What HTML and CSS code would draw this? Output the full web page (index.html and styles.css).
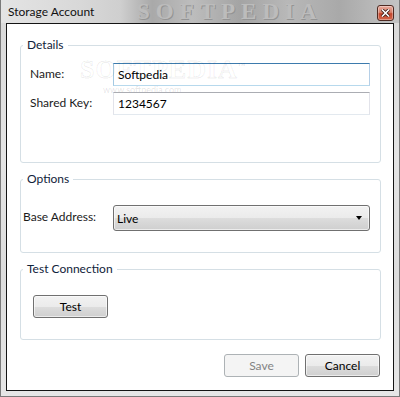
FILE: index.html
```html
<!DOCTYPE html>
<html lang="en">
<head>
    <meta charset="UTF-8">
    <title>Storage Account</title>
    <link rel="stylesheet" href="styles.css">
</head>
<body>

    <div class="window">
        <!-- Title bar -->
        <div class="titlebar">
            <span class="title">Storage Account</span>
            <span class="watermark">SOFTPEDIA</span>
            <button class="close" title="Close">
                <svg width="9" height="8" viewBox="0 0 9 8">
                    <path d="M1 0.5 L8 7.5 M8 0.5 L1 7.5" stroke="#3a1a14" stroke-width="3.2"/>
                    <path d="M1 0.5 L8 7.5 M8 0.5 L1 7.5" stroke="#ffffff" stroke-width="1.6"/>
                </svg>
            </button>
        </div>

        <!-- Client area -->
        <div class="client">
            <div class="client-mark">SOFTPEDIA<sup>™</sup></div>
            <div class="client-url">www.softpedia.com</div>

            <div class="group details">
                <span class="group-title">Details</span>
                <label class="field-label" for="name">Name:</label>
                <input class="textbox focused" id="name" type="text" value="Softpedia">
                <label class="field-label" for="key">Shared Key:</label>
                <input class="textbox" id="key" type="text" value="1234567">
            </div>

            <div class="group options">
                <span class="group-title">Options</span>
                <span class="field-label">Base Address:</span>
                <div class="combo">
                    <span>Live</span>
                    <span class="arrow"></span>
                </div>
            </div>

            <div class="group test">
                <span class="group-title">Test Connection</span>
                <button class="btn">Test</button>
            </div>

            <div class="footer">
                <button class="btn" disabled>Save</button>
                <button class="btn">Cancel</button>
            </div>
        </div>
    </div>

</body>
</html>
```

FILE: styles.css
```css
body {
    margin: 0;
    padding: 0;
    font-family: Lato, 'Open Sans', sans-serif;
    font-size: 12px;
    color: #1b1b1b;
}

/* Window frame */
.window {
    width: 400px;
    height: 397px;
    box-sizing: border-box;
    border: 1px solid #7a7a7a;
    border-top: none;
    padding: 0 5px 5px 5px;
    background: linear-gradient(to bottom, #d8d8d8, #e4e4e4 40%, #dcdcdc 70%, #e6e6e6);
}

.titlebar {
    position: relative;
    height: 23px;
    margin: 0 -5px;
    padding: 5px 5px 0 7px;
    box-sizing: border-box;
    display: flex;
    justify-content: space-between;
    align-items: flex-start;
    overflow: hidden;
    background: linear-gradient(to right, #e4e4e4 0, #d8d8d8 20%, #cfcfcf 30%, #a9a9a9 38%, #bdbdbd 48%, #a4a4a4 60%, #b8b8b8 72%, #a9a9a9 85%, #c4c4c4 100%);
}
.title {
    font-size: 12px;
    line-height: 14px;
    color: #111;
    position: relative;
    z-index: 1;
}
.watermark {
    position: absolute;
    left: 136px;
    top: 0;
    font-family: 'Liberation Serif', serif;
    font-weight: bold;
    font-size: 23px;
    line-height: 23px;
    letter-spacing: 6px;
    color: #bcbcbc;
    text-shadow: 1px 1px 0 #949494;
}
.close {
    position: relative;
    z-index: 1;
    width: 17px;
    height: 16px;
    margin: 0;
    padding: 0;
    display: flex;
    align-items: center;
    justify-content: center;
    border: 1px solid #4e2a22;
    border-radius: 3px;
    background: linear-gradient(to bottom, #e9a99b 0, #d7816c 45%, #c4442a 55%, #d2674c 100%);
    box-shadow: inset 0 0 0 1px rgba(255, 255, 255, 0.35);
}

/* Client area */
.client {
    position: relative;
    height: 368px;
    box-sizing: border-box;
    border: 1px solid #141414;
    background: #ffffff;
    display: flex;
    flex-direction: column;
}
.client-mark {
    position: absolute;
    left: 73px;
    top: 31px;
    font-family: 'Liberation Serif', serif;
    font-weight: bold;
    font-size: 26px;
    letter-spacing: 1px;
    color: transparent;
    -webkit-text-stroke: 1px rgba(0, 0, 0, 0.07);
    pointer-events: none;
    z-index: 2;
}
.client-mark sup {
    font-size: 8px;
    -webkit-text-stroke: 0;
    color: rgba(0, 0, 0, 0.1);
}
.client-url {
    position: absolute;
    left: 96px;
    top: 63px;
    font-size: 9px;
    line-height: 6px;
    color: rgba(0, 0, 0, 0.12);
    pointer-events: none;
}

/* Group boxes */
.group {
    position: relative;
    box-sizing: border-box;
    margin: 16px 12px 0 13px;
    border: 1px solid #d5dfe5;
    border-radius: 3px;
}
.group-title {
    position: absolute;
    top: -9px;
    left: 2px;
    padding: 0 4px;
    line-height: 16px;
    background: #ffffff;
    color: #10223a;
}
.field-label {
    line-height: 16px;
}

.details {
    margin-top: 21px;
    height: 118px;
    padding: 17px 10px 0 8px;
    display: grid;
    grid-template-columns: 84px 1fr;
    grid-auto-rows: 23px;
    row-gap: 6px;
    align-items: center;
}
.details .field-label {
    padding: 0 0 1px 1px;
}

.textbox {
    height: 23px;
    box-sizing: border-box;
    margin: 0;
    padding: 0 4px;
    font: inherit;
    color: #000;
    border: 1px solid;
    border-color: #abadb3 #e2e3ea #e3e9ef #e2e3ea;
    outline: none;
    background: #fff;
}
.textbox.focused {
    border-color: #3d7bad #b5cfe7 #b7d9ed #a4c9e3;
}

.options {
    height: 74px;
    padding: 25px 10px 0 2px;
    display: grid;
    grid-template-columns: 90px 1fr;
    align-items: start;
}
.options .field-label {
    padding-top: 4px;
}

/* Aero style buttons */
.combo,
.btn {
    box-sizing: border-box;
    border: 1px solid #707070;
    border-radius: 3px;
    background: linear-gradient(to bottom, #f2f2f2 0, #ebebeb 50%, #dddddd 50%, #cfcfcf 100%);
    box-shadow: inset 0 0 0 1px rgba(255, 255, 255, 0.6);
    font: inherit;
    color: #000;
}
.combo {
    height: 26px;
    padding: 0 6px 0 3px;
    display: flex;
    align-items: center;
    justify-content: space-between;
}
.arrow {
    width: 0;
    height: 0;
    border-left: 3.5px solid transparent;
    border-right: 3.5px solid transparent;
    border-top: 4px solid #000;
    margin-right: 1px;
}

.test {
    height: 71px;
    padding: 25px 0 0 12px;
}
.btn {
    display: block;
    width: 75px;
    height: 23px;
    margin: 0;
    padding: 0 0 1px 0;
}
.btn:disabled {
    border-color: #adb2b5;
    background: #f4f4f4;
    box-shadow: none;
    color: #838383;
}

.footer {
    margin-top: 14px;
    padding-right: 13px;
    display: flex;
    justify-content: flex-end;
    gap: 6px;
}
```
